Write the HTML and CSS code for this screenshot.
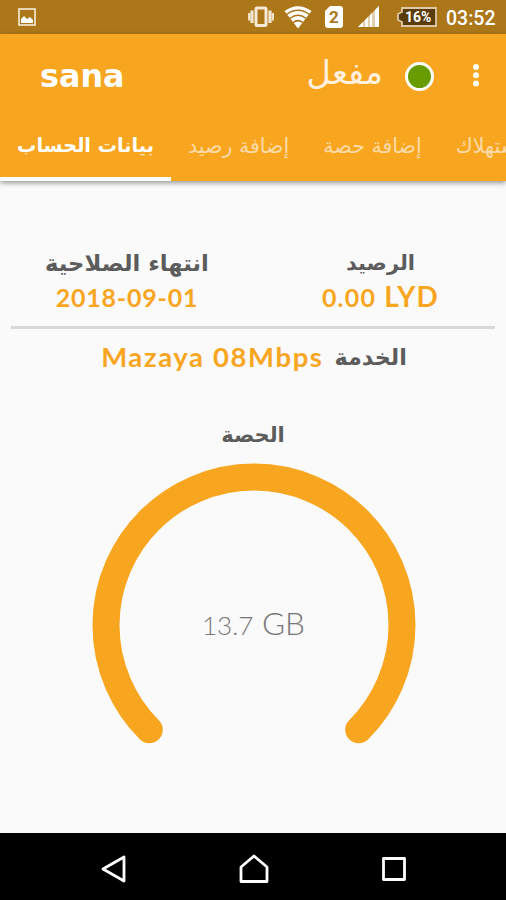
FILE: index.html
```html
<!DOCTYPE html>
<html lang="ar">
<head>
    <meta charset="UTF-8">
    <meta name="viewport" content="width=device-width, initial-scale=1.0">
    <title>sana</title>
    <link rel="stylesheet" href="styles.css">
</head>
<body>
    <div class="screen">
        <div class="status-bar">
            <svg class="picture" width="18" height="18" viewBox="0 0 18 18">
                <rect x="1" y="1" width="16" height="16" fill="none" stroke="#f3e6d0" stroke-width="1.7"/>
                <path d="M3 15v-4l3-3 3 3 3-2 3 3v3z" fill="#fff"/>
            </svg>
            <svg width="26" height="22" viewBox="0 0 26 22">
                <rect x="8" y="2" width="10" height="17.500" rx="1" fill="none" stroke="#f6ead6" stroke-width="3"/>
                <path d="M4 4.500v12.500M22 4.500v12.500" stroke="#f3e6d0" stroke-width="3.200"/>
                <path d="M1.200 7v7.500M24.800 7v7.500" stroke="#f3e6d0" stroke-width="2.200"/>
            </svg>
            <svg class="wifi" width="28" height="23" viewBox="0 0 28 23">
                <path d="M14 22.500L.5 5Q14-4.500 27.500 5z" fill="#fff"/>
                <path d="M2.500 8.500Q14 0 25.500 8.500M5.800 12.500Q14 6 22.200 12.500M9 16.700Q14 12.500 19 16.700" fill="none" stroke="#ab7718" stroke-width="1.500"/>
            </svg>
            <div class="sim">2</div>
            <svg class="signal" width="22" height="22" viewBox="0 0 22 22">
                <path d="M0 21L21 0v21z" fill="#e2ceb0"/>
                <path d="M0 21l5-5v5zM7 14l3-3v10H7zM12 9l2-2v14h-2zM17 4l4-4v21h-4z" fill="#fff"/>
            </svg>
            <div class="battery">
                <svg width="41" height="20" viewBox="0 0 41 20">
                    <path d="M6 1h34v18H6v-4L2 13V7l4-2z" fill="#5a3c0a" stroke="#dcc8a5" stroke-width="1.800"/>
                </svg>
                <span class="battery-text">16%</span>
            </div>
            <span class="clock">03:52</span>
        </div>

        <div class="app-bar">
            <div class="toolbar">
                <h1 class="title">sana</h1>
                <span class="state" dir="rtl">مفعل</span>
                <span class="dot"></span>
                <svg class="menu" width="8" height="24" viewBox="0 0 8 24" fill="#fff">
                    <circle cx="4" cy="3" r="3"/>
                    <circle cx="4" cy="11.300" r="3"/>
                    <circle cx="4" cy="19.500" r="3"/>
                </svg>
            </div>
            <div class="tabs">
                <div class="tab active"><span dir="rtl">بيانات الحساب</span></div>
                <div class="tab"><span dir="rtl">إضافة رصيد</span></div>
                <div class="tab"><span dir="rtl">إضافة حصة</span></div>
                <div class="tab"><span dir="rtl">الاستهلاك</span></div>
            </div>
        </div>

        <div class="content">
            <div class="summary">
                <div class="item">
                    <div class="label" dir="rtl">انتهاء الصلاحية</div>
                    <div class="value date">2018-09-01</div>
                </div>
                <div class="item balance">
                    <div class="label" dir="rtl">الرصيد</div>
                    <div class="value"><span class="number">0.00</span> LYD</div>
                </div>
            </div>
            <div class="service">
                <span class="value plan">Mazaya 08Mbps</span>
                <span class="label" dir="rtl">الخدمة</span>
            </div>
            <div class="label quota-label" dir="rtl">الحصة</div>
            <div class="gauge">
                <svg width="324" height="286" viewBox="0 0 324 286">
                    <path d="M57.300 266.700A148 148 0 1 1 266.700 266.700" fill="none" stroke="#f8a51f" stroke-width="27" stroke-linecap="round"/>
                </svg>
                <div class="gauge-text"><span class="gauge-number">13.7</span> GB</div>
            </div>
        </div>

        <div class="nav-bar">
            <svg width="28" height="30" viewBox="0 0 28 30">
                <path d="M4 15L25 3v24z"/>
            </svg>
            <svg width="30" height="30" viewBox="0 0 30 30">
                <path d="M2 27.500V13L15 2l13 11v14.500z"/>
            </svg>
            <svg width="28" height="26" viewBox="0 0 28 26">
                <rect x="3.500" y="2.500" width="21" height="21"/>
            </svg>
        </div>
    </div>
</body>
</html>
```

FILE: styles.css
```css
* { box-sizing: border-box; }
body {
    margin: 0;
    font-family: Lato, "DejaVu Sans", sans-serif;
    background: #fafafa;
}
.screen {
    width: 506px;
    height: 900px;
    display: flex;
    flex-direction: column;
    overflow: hidden;
}

/* status bar */
.status-bar {
    height: 34px;
    flex: none;
    display: flex;
    align-items: center;
    padding: 0 10px 0 18px;
    background: #ab7718;
    color: #fff;
    font-family: Roboto, sans-serif;
}
.picture { margin-right: auto; }
.wifi { margin-left: 10px; }
.sim {
    width: 18px;
    height: 22px;
    margin-left: 13px;
    border-radius: 3px;
    background: #fff;
    color: #ab7718;
    font-size: 17px;
    font-weight: 700;
    line-height: 23px;
    text-align: center;
    clip-path: polygon(5px 0, 100% 0, 100% 100%, 0 100%, 0 5px);
}
.signal { margin-left: 15px; }
.battery {
    display: grid;
    margin-left: 16px;
}
.battery svg, .battery-text { grid-area: 1 / 1; }
.battery-text {
    padding-left: 9px;
    font-size: 14px;
    font-weight: 700;
    line-height: 20px;
}
.clock {
    width: 50px;
    margin-left: 9px;
    padding-top: 2px;
    font-size: 19.5px;
    font-weight: 500;
    white-space: nowrap;
}

/* header */
.app-bar {
    height: 147px;
    flex: none;
    background: #f8a51f;
    color: #fff;
    box-shadow: 0 2px 5px rgba(0, 0, 0, 0.4);
}
.toolbar {
    height: 83px;
    display: flex;
    align-items: center;
    padding: 0 26px 0 40px;
}
.title {
    margin: 0 auto 0 0;
    font-family: "DejaVu Sans", sans-serif;
    font-size: 31.8px;
    font-weight: 700;
}
.state {
    margin-bottom: 9px;
    font-size: 33.5px;
    opacity: 0.85;
}
.dot {
    width: 29px;
    height: 29px;
    margin: 2px 38px 0 22px;
    border: 3px solid #fff;
    border-radius: 50%;
    background: #669c00;
}
.tabs {
    height: 64px;
    display: flex;
    overflow: hidden;
}
.tab {
    flex: none;
    padding: 0 17px;
    font-family: "DejaVu Sans", sans-serif;
    font-size: 20.6px;
    line-height: 58px;
    white-space: nowrap;
    color: #fddba6;
}
.tab.active {
    border-bottom: 4px solid #fff;
    font-size: 19.3px;
    font-weight: 700;
    color: #fff;
}

/* account data */
.content {
    flex: 1;
    padding: 66px 11px 0;
}
.label {
    font-family: "DejaVu Sans", sans-serif;
    font-size: 22.7px;
    font-weight: 700;
    line-height: 32px;
    color: #5c5c5c;
    white-space: nowrap;
}
.value {
    font-size: 28px;
    font-weight: 700;
    line-height: 34px;
    letter-spacing: 1.2px;
    color: #f8a51f;
    white-space: nowrap;
}
.summary {
    height: 82px;
    display: grid;
    grid-template-columns: 232px 1fr;
    border-bottom: 3px solid #d9d9d9;
    text-align: center;
}
.balance { padding-left: 23px; }
.balance .label { font-size: 21px; }
.date {
    font-size: 25px;
    line-height: 36px;
    letter-spacing: 0.8px;
}
.number { font-size: 25px; }
.service {
    display: flex;
    justify-content: center;
    gap: 11px;
    padding: 11px 0 0 2px;
}
.service .label {
    font-size: 22.3px;
    line-height: 34px;
}
.plan {
    font-size: 27.5px;
    letter-spacing: 1.6px;
}
.quota-label {
    margin-top: 45px;
    font-size: 21px;
    text-align: center;
}
.gauge {
    display: grid;
    justify-content: center;
    margin: 12px 0 0 1px;
}
.gauge svg, .gauge-text { grid-area: 1 / 1; }
.gauge-text {
    padding-top: 140px;
    font-size: 31.5px;
    font-weight: 300;
    line-height: 40px;
    text-align: center;
    color: #777;
}
.gauge-number { font-size: 26px; }

/* navigation */
.nav-bar {
    height: 67px;
    flex: none;
    display: flex;
    align-items: center;
    justify-content: space-between;
    padding: 4px 98px 0 99px;
    background: #000;
}
.nav-bar svg {
    fill: none;
    stroke: #fff;
    stroke-width: 2.800;
    stroke-linejoin: round;
}
```
